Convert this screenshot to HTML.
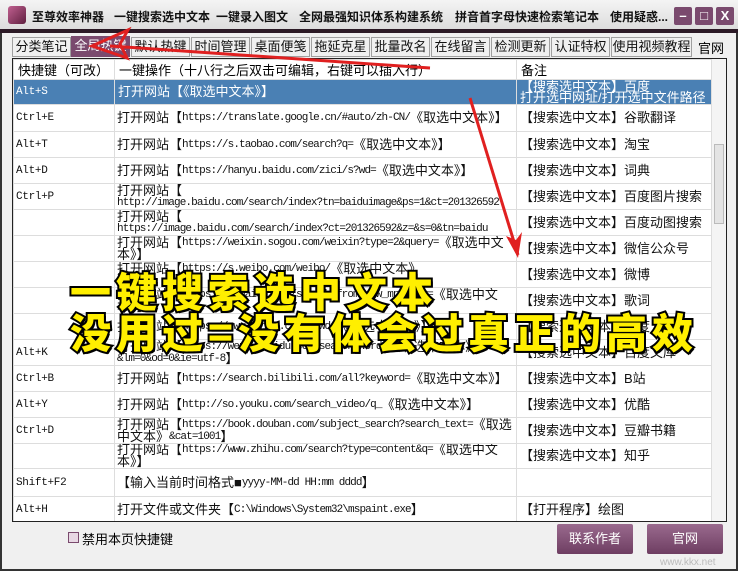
<!DOCTYPE html>
<html><head><meta charset="utf-8"><style>
*{margin:0;padding:0;box-sizing:border-box}
body{width:738px;height:571px;overflow:hidden;background:#f0f0f0;font-family:"Liberation Sans","Noto Sans CJK SC",sans-serif;position:relative}
.title{position:absolute;left:0;top:0;width:738px;height:30px;background:linear-gradient(#f4f4f4,#dcdcdc);font-size:12px;color:#111;font-weight:bold}
.title span{position:absolute;top:8px;white-space:nowrap}
.band{position:absolute;left:0;top:29px;width:738px;height:4px;background:#2c1a26}
.frame{position:absolute;left:0;top:33px;width:738px;height:538px;border-left:2px solid #333;border-right:2px solid #333;border-bottom:2px solid #333}
.wbtn{position:absolute;top:7px;width:18px;height:18px;background:#7a4a6e;border-radius:2px;color:#fff;font-size:13px;text-align:center;line-height:18px;font-weight:bold}
.tab{position:absolute;top:37px;height:20px;border:1px solid #a0a0a0;background:#f0f0f0;font-size:13px;line-height:18px;text-align:center;color:#111}
.tab.act{background:#7a4a6e;color:#fff;border-color:#7a4a6e;top:36px;height:21px}
.grid{position:absolute;left:12px;top:58px;width:715px;height:464px;border:1px solid #222;background:#fff;overflow:hidden}
table{border-collapse:collapse;width:700px;table-layout:fixed;font-family:"Liberation Mono","Noto Sans CJK SC",monospace;font-size:11px;letter-spacing:-0.9px}
td{border:1px solid #ddd;vertical-align:middle;line-height:12px;padding:0 2px;overflow:hidden;white-space:nowrap;color:#111}
td.w{white-space:normal;word-break:break-all}
td.c,.z{font-family:"Liberation Sans","Noto Sans CJK SC",sans-serif;font-size:13px;letter-spacing:0}
.z{line-height:12px;vertical-align:top}
td.k{font-size:11px;letter-spacing:-0.3px}
td.c{padding-left:3px}
th{font-weight:normal;font-size:13px;text-align:left;padding:0 4px;border:1px solid #ddd;height:20px;background:#fff;font-family:"Liberation Sans","Noto Sans CJK SC",sans-serif;letter-spacing:0}
tr.sel td{background:#4a80b4;color:#fff}
.sb{position:absolute;right:0;top:0;width:15px;height:462px;background:#f4f4f4;border-left:1px solid #ddd}
.big{position:absolute;font-family:"Noto Sans CJK SC",sans-serif;font-weight:900;color:#ffef00;-webkit-text-stroke:4px #000;paint-order:stroke fill;font-size:41px;white-space:nowrap;letter-spacing:5px;text-shadow:2px 2px 0 #000}
.btn{position:absolute;top:524px;width:76px;height:30px;background:linear-gradient(#9a6a8e,#6e3e62);color:#fff;font-size:13px;text-align:center;line-height:30px;border-radius:2px}
</style></head><body>
<div class="title">
<div style="position:absolute;left:8px;top:6px;width:18px;height:18px;background:linear-gradient(135deg,#c06090,#602040);border-radius:3px"></div>
<span style="left:32px">至尊效率神器</span><span style="left:114px">一键搜索选中文本</span><span style="left:216px">一键录入图文</span><span style="left:299px">全网最强知识体系构建系统</span><span style="left:455px">拼音首字母快速检索笔记本</span><span style="left:610px">使用疑惑...</span>
</div>
<div class="wbtn" style="left:674px">–</div><div class="wbtn" style="left:695px">□</div><div class="wbtn" style="left:716px">X</div>
<div class="band"></div><div class="frame"></div>
<div class="tab" style="left:12px;width:59px">分类笔记</div>
<div class="tab act" style="left:71px;width:59px">全局热键</div>
<div class="tab" style="left:131px;width:59px">默认热键</div>
<div class="tab" style="left:191px;width:59px">时间管理</div>
<div class="tab" style="left:251px;width:59px">桌面便笺</div>
<div class="tab" style="left:311px;width:59px">拖延克星</div>
<div class="tab" style="left:371px;width:59px">批量改名</div>
<div class="tab" style="left:431px;width:59px">在线留言</div>
<div class="tab" style="left:491px;width:59px">检测更新</div>
<div class="tab" style="left:551px;width:59px">认证特权</div>
<div class="tab" style="left:611px;width:81px">使用视频教程</div>
<div style="position:absolute;left:698px;top:38px;font-size:13px">官网</div>
<div class="grid">
<table>
<colgroup><col style="width:101px"><col style="width:402px"><col style="width:197px"></colgroup>
<tr><th>快捷键（可改）</th><th>一键操作（十八行之后双击可编辑，右键可以插入行）</th><th>备注</th></tr>
<tr class="sel" style="height:25px"><td class="k">Alt+S</td><td class="c" style="border:1px dotted #000">打开网站【《取选中文本》】</td><td class="c" style="line-height:11px">【搜索选中文本】百度<br>打开选中网址/打开选中文件路径</td></tr>
<tr style="height:27px"><td class="k">Ctrl+E</td><td class="w"><span class="z">打开网站【</span>https://translate.google.cn/#auto/zh-CN/<span class="z">《取选中文本》】</span></td><td class="c">【搜索选中文本】谷歌翻译</td></tr>
<tr style="height:26px"><td class="k">Alt+T</td><td><span class="z">打开网站【</span>https://s.taobao.com/search?q=<span class="z">《取选中文本》】</span></td><td class="c">【搜索选中文本】淘宝</td></tr>
<tr style="height:26px"><td class="k">Alt+D</td><td><span class="z">打开网站【</span>https://hanyu.baidu.com/zici/s?wd=<span class="z">《取选中文本》】</span></td><td class="c">【搜索选中文本】词典</td></tr>
<tr style="height:26px"><td class="k">Ctrl+P</td><td><span class="z">打开网站【</span><br>http://image.baidu.com/search/index?tn=baiduimage&amp;ps=1&amp;ct=201326592</td><td class="c">【搜索选中文本】百度图片搜索</td></tr>
<tr style="height:26px"><td></td><td><span class="z">打开网站【</span><br>https://image.baidu.com/search/index?ct=201326592&amp;z=&amp;s=0&amp;tn=baidu</td><td class="c">【搜索选中文本】百度动图搜索</td></tr>
<tr style="height:26px"><td></td><td class="w"><span class="z">打开网站【</span>https://weixin.sogou.com/weixin?type=2&amp;query=<span class="z">《取选中文本》】</span></td><td class="c">【搜索选中文本】微信公众号</td></tr>
<tr style="height:26px"><td></td><td><span class="z">打开网站【</span>https://s.weibo.com/weibo/<span class="z">《取选中文本》</span><br><span class="z">】</span></td><td class="c">【搜索选中文本】微博</td></tr>
<tr style="height:26px"><td></td><td class="w"><span class="z">打开网站【</span>https://y.baidu.com/search?from=new_mp3&amp;key=<span class="z">《取选中文本》】</span></td><td class="c">【搜索选中文本】歌词</td></tr>
<tr style="height:26px"><td></td><td><span class="z">打开网站【</span>https://www.baidu.com/s?wd=<span class="z">《取选中文本》】</span></td><td class="c">【搜索选中文本】百度</td></tr>
<tr style="height:26px"><td class="k">Alt+K</td><td><span class="z">打开网站【</span>https://wenku.baidu.com/search?word=<span class="z">《取选中文本》</span><br>&amp;lm=0&amp;od=0&amp;ie=utf-8<span class="z">】</span></td><td class="c">【搜索选中文本】百度文库</td></tr>
<tr style="height:26px"><td class="k">Ctrl+B</td><td><span class="z">打开网站【</span>https://search.bilibili.com/all?keyword=<span class="z">《取选中文本》】</span></td><td class="c">【搜索选中文本】B站</td></tr>
<tr style="height:26px"><td class="k">Alt+Y</td><td><span class="z">打开网站【</span>http://so.youku.com/search_video/q_<span class="z">《取选中文本》】</span></td><td class="c">【搜索选中文本】优酷</td></tr>
<tr style="height:26px"><td class="k">Ctrl+D</td><td class="w"><span class="z">打开网站【</span>https://book.douban.com/subject_search?search_text=<span class="z">《取选中文本》</span>&amp;cat=1001<span class="z">】</span></td><td class="c">【搜索选中文本】豆瓣书籍</td></tr>
<tr style="height:25px"><td></td><td class="w"><span class="z">打开网站【</span>https://www.zhihu.com/search?type=content&amp;q=<span class="z">《取选中文本》】</span></td><td class="c">【搜索选中文本】知乎</td></tr>
<tr style="height:28px"><td class="k">Shift+F2</td><td><span class="z">【输入当前时间格式■</span>yyyy-MM-dd HH:mm dddd<span class="z">】</span></td><td></td></tr>
<tr style="height:27px"><td class="k">Alt+H</td><td><span class="z">打开文件或文件夹【</span>C:\Windows\System32\mspaint.exe<span class="z">】</span></td><td class="c">【打开程序】绘图</td></tr>
</table>
<div class="sb"><div style="position:absolute;left:2px;top:85px;width:10px;height:80px;background:#e4e4e4;border:1px solid #bbb"></div></div>
</div>
<div style="position:absolute;left:68px;top:532px;width:11px;height:11px;border:1px solid #7a4a6e;background:#e8d8e4"></div>
<div style="position:absolute;left:82px;top:529px;font-size:13px">禁用本页快捷键</div>
<div class="btn" style="left:557px">联系作者</div>
<div class="btn" style="left:647px">官网</div>
<div style="position:absolute;left:660px;top:557px;font-size:10px;color:#bbb">www.kkx.net</div>
<div class="big" style="left:70px;top:259px">一键搜索选中文本</div>
<div class="big" style="left:70px;top:300px">没用过=没有体会过真正的高效</div>
<svg style="position:absolute;left:0;top:0" width="738" height="571">
<g fill="none" stroke="#e02020" stroke-width="3">
<path d="M430 68 L110 46"/>
<path d="M470 98 L518 255"/>
</g>
<path d="M92 46 L128 30 L120 44 L127 58 Z" fill="none" stroke="#e02020" stroke-width="3"/>
<path d="M518 258 L506 236 L516 240 L522 232 Z" fill="#e02020"/>
</svg>
</body></html>
